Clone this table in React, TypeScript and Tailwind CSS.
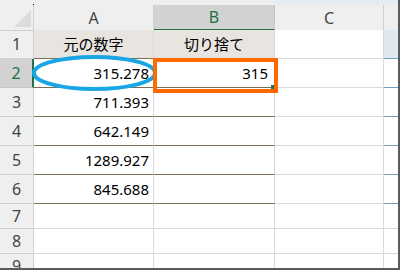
const font = { fontFamily: '"Noto Sans", "Noto Sans CJK JP", sans-serif' }

type Row = { n: number; a?: string; b?: string; tall: boolean }

const rows: Row[] = [
  { n: 1, a: '元の数字', b: '切り捨て', tall: true },
  { n: 2, a: '315.278', b: '315', tall: true },
  { n: 3, a: '711.393', tall: true },
  { n: 4, a: '642.149', tall: true },
  { n: 5, a: '1289.927', tall: true },
  { n: 6, a: '845.688', tall: true },
  { n: 7, tall: false },
  { n: 8, tall: false },
  { n: 9, tall: false },
]

const cols = 'grid grid-cols-[34px_120px_121px_109px_1fr]'

function RowHeader({ n }: { n: number }) {
  const active = n === 2
  return (
    <div
      className={
        active
          ? 'flex items-center justify-center bg-[#d2d2d2] border-b border-[#c6c6c6] border-r-2 border-r-[#217346] text-[#217346] text-[16px]'
          : 'flex items-center justify-center bg-[#efefef] border-b border-r border-[#d0d0d0] text-[#444] text-[16px]'
      }
    >
      {n}
    </div>
  )
}

function DataRow({ row }: { row: Row }) {
  const head = row.n === 1
  const table = row.n <= 6
  const lineAB = table ? 'border-b border-b-[#7b6f57]' : 'border-b border-b-[#dadada]'
  return (
    <div className={`${cols} ${row.tall ? 'h-[29px]' : 'h-[25px]'}`}>
      <RowHeader n={row.n} />
      <div
        className={`flex items-center border-r border-r-[#dadada] ${lineAB} text-[15px] text-black ${
          head ? 'justify-center bg-[#e8e5e0]' : 'justify-end pr-[4px] bg-white'
        }`}
      >
        {row.a}
      </div>
      <div
        className={`flex items-center border-r border-r-[#dadada] ${lineAB} text-[15px] text-black ${
          head ? 'justify-center bg-[#e8e5e0]' : 'justify-end pr-[6px] bg-white'
        }`}
      >
        {row.b}
      </div>
      <div className="border-r border-b border-[#dadada] bg-white" />
      <div
        className={
          table
            ? `border-b border-b-[#6f9fbd] ${head ? 'bg-[#dfe8f0]' : 'bg-white'}`
            : 'border-b border-[#dadada] bg-white'
        }
      />
    </div>
  )
}

export default function App() {
  return (
    <div
      className="relative w-[400px] h-[270px] overflow-hidden bg-white border-r-2 border-b-2 border-[#5b5b5b]"
      style={font}
    >
      {/* strip under the formula bar */}
      <div className="relative flex h-[5px]">
        <div className="w-[275px] bg-[#efefef]" />
        <div className="flex-1 bg-[#e3ecf2]" />
        <div className="absolute left-[33px] top-[4px] w-[1px] h-[1px] bg-black" />
      </div>

      {/* column letters */}
      <div className={`${cols} h-[25px] text-[16px]`}>
        <div className="relative bg-[#efefef] border-r border-b border-[#d0d0d0]">
          <svg className="absolute left-[14px] top-[5px]" width="17" height="17" viewBox="0 0 17 17">
            <polygon points="17,0 17,17 0,17" fill="#dcdcdc" />
          </svg>
        </div>
        <div className="flex items-center justify-center bg-[#efefef] border-r border-b border-[#d0d0d0] text-[#444]">
          A
        </div>
        <div className="flex items-center justify-center bg-[#d2d2d2] border-r border-r-[#c6c6c6] border-b-2 border-b-[#217346] text-[#217346]">
          B
        </div>
        <div className="flex items-center justify-center bg-[#efefef] border-r border-b border-[#d0d0d0] text-[#444]">
          C
        </div>
        <div className="bg-[#efefef] border-b border-[#d0d0d0]" />
      </div>

      {rows.map((r) => (
        <DataRow key={r.n} row={r} />
      ))}

      {/* fill handle of the active cell */}
      <div className="absolute left-[271px] top-[85px] w-[4px] h-[4px] bg-[#217346]" />

      {/* markers */}
      <svg className="absolute left-0 top-0 pointer-events-none" width="400" height="270">
        <ellipse cx="94.5" cy="73" rx="60.5" ry="16" fill="none" stroke="#1aa6e4" strokeWidth="4" />
      </svg>
      <div className="absolute left-[153px] top-[58px] w-[125px] h-[35px] border-[4px] border-[#ff6a00]" />
    </div>
  )
}
